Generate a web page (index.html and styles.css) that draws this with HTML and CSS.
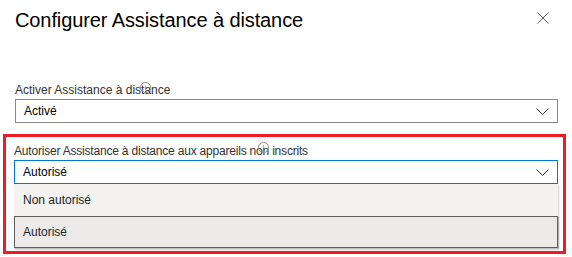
FILE: index.html
```html
<!DOCTYPE html>
<html lang="fr">
<head>
<meta charset="utf-8">
<link rel="stylesheet" href="styles.css">
</head>
<body>
<div class="panel">
  <div class="header">
    <h1 class="title">Configurer Assistance à distance</h1>
    <button class="close" aria-label="Fermer">
      <svg width="12" height="12" viewBox="0 0 12 12"><path d="M0.5 0.5 L11.5 11.5 M11.5 0.5 L0.5 11.5" stroke="#605e5c" stroke-width="1" fill="none"/></svg>
    </button>
  </div>

  <div class="field first">
    <div class="label">Activer Assistance à distance<span class="info info1">i</span></div>
    <div class="select">
      <span class="value">Activé</span>
      <svg class="chev" width="13" height="7" viewBox="0 0 13 7"><path d="M0.5 0.5 L6.5 6.5 L12.5 0.5" stroke="#323130" stroke-width="1" fill="none"/></svg>
    </div>
  </div>

  <div class="highlight">
    <div class="label tight">Autoriser Assistance à distance aux appareils non inscrits<span class="info info2">i</span></div>
    <div class="select open">
      <span class="value">Autorisé</span>
      <svg class="chev" width="13" height="7" viewBox="0 0 13 7"><path d="M0.5 0.5 L6.5 6.5 L12.5 0.5" stroke="#323130" stroke-width="1" fill="none"/></svg>
    </div>
    <div class="listbox">
      <div class="option">Non autorisé</div>
      <div class="option selected">Autorisé</div>
    </div>
  </div>
</div>
</body>
</html>
```
FILE: styles.css
```css
html, body {
  margin: 0;
  padding: 0;
  background: #ffffff;
}
body {
  font-family: "Liberation Sans", Arial, sans-serif;
  color: #201f1e;
  width: 572px;
  height: 257px;
  overflow: hidden;
}
.header {
  display: flex;
  justify-content: space-between;
  align-items: flex-start;
  padding: 6px 23px 0 15px;
}
.title {
  margin: 0;
  font-size: 20px;
  line-height: 28px;
  font-weight: normal;
  letter-spacing: -0.1px;
  color: #000000;
}
.close {
  border: 0;
  background: transparent;
  padding: 0;
  margin-top: 6px;
  width: 12px;
  height: 12px;
  display: flex;
}
.field.first {
  margin: 48px 14px 0 15px;
}
.label {
  position: relative;
  font-size: 12px;
  line-height: 16px;
  color: #323130;
}
.label.tight {
  letter-spacing: -0.2px;
}
.info {
  position: absolute;
  width: 9px;
  height: 9px;
  border: 1px solid #8a8886;
  border-radius: 50%;
  font-size: 7px;
  line-height: 9px;
  text-align: center;
  letter-spacing: 0;
  color: #605e5c;
  box-sizing: content-box;
}
.info1 { left: 125px; top: 0px; }
.info2 { left: 244px; top: -1px; }
.select {
  margin-top: 1px;
  height: 24px;
  box-sizing: border-box;
  border: 1px solid #8a8886;
  display: flex;
  align-items: center;
  justify-content: space-between;
  padding: 0 8px 0 8px;
  font-size: 12px;
  color: #000000;
}
.select.open {
  border-color: #0078d4;
}
.highlight {
  margin: 11px 6px 0 3px;
  border: 3px solid #ed1c24;
  padding: 6px 5px 2px 8px;
}
.listbox {
  background: #f3f2f1;
  box-shadow: 1px 1px 2px rgba(0, 0, 0, 0.18);
  padding-bottom: 1px;
}
.option {
  height: 32px;
  display: flex;
  align-items: center;
  padding-left: 9px;
  font-size: 12px;
  color: #201f1e;
  box-sizing: border-box;
}
.option.selected {
  background: #edebe9;
  border: 1px solid #605e5c;
  padding-left: 8px;
  box-shadow: 1px 1px 1px rgba(0, 0, 0, 0.2);
}
```
